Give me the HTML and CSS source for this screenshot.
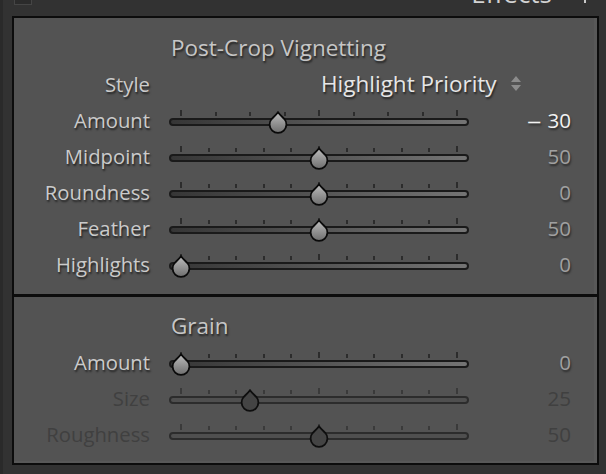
FILE: index.html
```html
<!DOCTYPE html>
<html>
<head>
<meta charset="utf-8">
<title>Effects</title>
<link rel="stylesheet" href="styles.css">
</head>
<body>
<svg class="defs" width="0" height="0">
	<defs>
		<linearGradient id="knob" x1="0" y1="0" x2="0" y2="1">
			<stop offset="0" stop-color="#bdbdbd"/>
			<stop offset="1" stop-color="#6e6e6e"/>
		</linearGradient>
		<symbol id="drop" viewBox="0 0 22 23">
			<path d="M11 1.2 C12.7 3.6 15.2 5.8 17.4 8 A8.4 8.4 0 1 1 4.6 8 C6.8 5.8 9.3 3.6 11 1.2 Z"/>
		</symbol>
	</defs>
</svg>

<div class="top">
	<span class="toggle"></span>
	<span class="heading">Effects</span>
	<span class="disclose"></span>
</div>

<div class="panel">
	<div class="section">
		<div class="title">Post-Crop Vignetting</div>
		<div class="row">
			<span class="label">Style</span>
			<div class="popup">
				Highlight Priority
				<svg class="updown" width="10" height="16" viewBox="0 0 10 16"><path d="M5 0 L10 6 L0 6 Z M0 9 L10 9 L5 15 Z"/></svg>
			</div>
		</div>
		<div class="row">
			<span class="label">Amount</span>
			<div class="slider">
				<div class="ticks"><i class="long"></i><i></i><i></i><i></i><i class="long"></i><i></i><i></i><i></i><i class="long"></i></div>
				<div class="track"></div>
				<svg class="thumb" style="left:97.6px"><use href="#drop"/></svg>
			</div>
			<span class="value hot"><span class="dash">&ndash;</span>30</span>
		</div>
		<div class="row">
			<span class="label">Midpoint</span>
			<div class="slider">
				<div class="ticks"><i class="long"></i><i></i><i></i><i></i><i></i><i class="long"></i><i></i><i></i><i></i><i></i><i class="long"></i></div>
				<div class="track"></div>
				<svg class="thumb" style="left:139px"><use href="#drop"/></svg>
			</div>
			<span class="value">50</span>
		</div>
		<div class="row">
			<span class="label">Roundness</span>
			<div class="slider">
				<div class="ticks"><i class="long"></i><i></i><i></i><i></i><i></i><i class="long"></i><i></i><i></i><i></i><i></i><i class="long"></i></div>
				<div class="track"></div>
				<svg class="thumb" style="left:139px"><use href="#drop"/></svg>
			</div>
			<span class="value">0</span>
		</div>
		<div class="row">
			<span class="label">Feather</span>
			<div class="slider">
				<div class="ticks"><i class="long"></i><i></i><i></i><i></i><i></i><i class="long"></i><i></i><i></i><i></i><i></i><i class="long"></i></div>
				<div class="track"></div>
				<svg class="thumb" style="left:139px"><use href="#drop"/></svg>
			</div>
			<span class="value">50</span>
		</div>
		<div class="row">
			<span class="label">Highlights</span>
			<div class="slider">
				<div class="ticks"><i class="long"></i><i></i><i></i><i></i><i></i><i class="long"></i><i></i><i></i><i></i><i></i><i class="long"></i></div>
				<div class="track"></div>
				<svg class="thumb" style="left:1px"><use href="#drop"/></svg>
			</div>
			<span class="value">0</span>
		</div>
	</div>

	<div class="section grain">
		<div class="title">Grain</div>
		<div class="row">
			<span class="label">Amount</span>
			<div class="slider">
				<div class="ticks"><i class="long"></i><i></i><i></i><i></i><i></i><i class="long"></i><i></i><i></i><i></i><i></i><i class="long"></i></div>
				<div class="track"></div>
				<svg class="thumb" style="left:1px"><use href="#drop"/></svg>
			</div>
			<span class="value">0</span>
		</div>
		<div class="row off">
			<span class="label">Size</span>
			<div class="slider">
				<div class="ticks"><i class="long"></i><i></i><i></i><i></i><i></i><i class="long"></i><i></i><i></i><i></i><i></i><i class="long"></i></div>
				<div class="track"></div>
				<svg class="thumb" style="left:70px"><use href="#drop"/></svg>
			</div>
			<span class="value">25</span>
		</div>
		<div class="row off">
			<span class="label">Roughness</span>
			<div class="slider">
				<div class="ticks"><i class="long"></i><i></i><i></i><i></i><i></i><i class="long"></i><i></i><i></i><i></i><i></i><i class="long"></i></div>
				<div class="track"></div>
				<svg class="thumb" style="left:139px"><use href="#drop"/></svg>
			</div>
			<span class="value">50</span>
		</div>
	</div>
</div>
</body>
</html>
```

FILE: styles.css
```css
*{margin:0; padding:0; box-sizing:border-box;}
body{background:#323232; width:606px; height:474px; overflow:hidden; border-left:3px solid #2a2a2a; font-family:"Open Sans", "Liberation Sans", sans-serif;}
.defs{position:absolute;}

.top{height:16px; display:flex; align-items:flex-start; overflow:hidden; padding-left:11px;}
.toggle{width:18px; height:6px; margin-top:-1px; background:#2b2b2b; border:1px solid #454545; border-top:none;}
.heading{margin-left:auto; margin-top:-21px; font-size:26px; line-height:28px; color:#d2d2d2;}
.disclose{width:2px; height:3px; background:#c8c8c8; margin-left:32px; margin-right:20px;}

.panel{margin-left:9px; width:587px; border:2px solid #0c0c0c; background:#535353; box-shadow:inset -3px -2px 0 #585858;}
.section{padding:12px 0 12px;}
.section.grain{border-top:3px solid #0c0c0c; padding:11px 0 11px;}

.title{padding-left:157px; height:36px; line-height:36px; font-size:22.5px; color:#c6c6c6; text-shadow:1px 2px 2px rgba(0,0,0,0.6);}

.row{display:flex; align-items:center; height:36px;}
.label{width:136px; text-align:right; font-size:20.3px; line-height:36px; color:#cbcbcb; text-shadow:1px 2px 2px rgba(0,0,0,0.6);}
.popup{margin-left:171px; display:flex; align-items:center; font-size:22.5px; line-height:36px; color:#e6e6e6; text-shadow:1px 2px 2px rgba(0,0,0,0.6);}
.updown{margin-left:14px; fill:#8c8c8c;}

.slider{position:relative; width:300px; height:36px; margin-left:19px;}
.ticks{position:absolute; left:11px; right:11px; top:8px; height:6px; display:flex; justify-content:space-between; align-items:flex-end;}
.ticks i{display:block; width:2px; height:4px; background:#2c2c2c;}
.ticks i.long{height:6px;}
.track{position:absolute; left:0; right:0; top:16px; height:8px; border-radius:4px; border:2px solid #1a1a1a; background:linear-gradient(to right, #363636, #747474);}
.thumb{position:absolute; top:9px; width:22px; height:23px; fill:url(#knob); stroke:#0a0a0a; stroke-width:1.8;}

.value{width:102px; text-align:right; font-size:20.6px; line-height:36px; color:#a0a0a0; text-shadow:1px 2px 2px rgba(0,0,0,0.5);}
.value.hot{color:#f2f2f2;}
.dash{display:inline-block; transform:scaleX(1.4); margin-right:8px;}

.row.off .label, .row.off .value{color:#404040; text-shadow:none;}
.row.off .track{background:#4f4f4f; border-color:#2c2c2c;}
.row.off .ticks i{background:#3a3a3a;}
.row.off .thumb{fill:#444; stroke:#0e0e0e;}
```
